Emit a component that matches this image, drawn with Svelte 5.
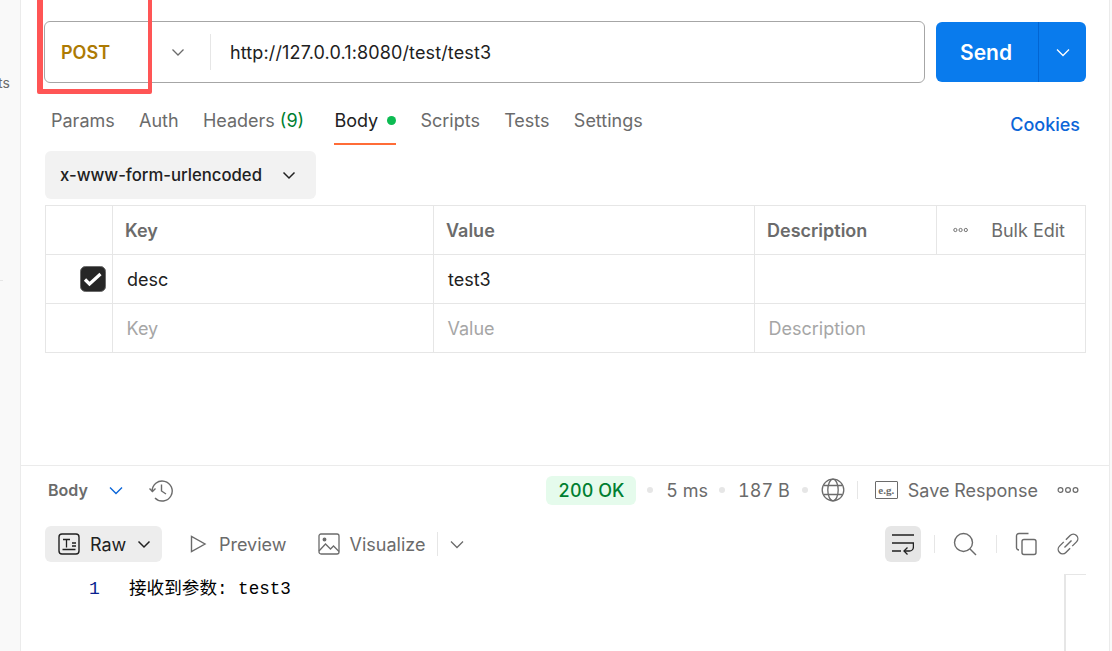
<script>
  const tabs = [
    { label: 'Params' },
    { label: 'Auth' },
    { label: 'Headers', count: '(9)' },
    { label: 'Body', active: true, dot: true },
    { label: 'Scripts' },
    { label: 'Tests' },
    { label: 'Settings' }
  ];
</script>

<div class="app">
  <aside class="rail">
    <span class="railText">ts</span>
    <div class="railLine"></div>
  </aside>

  <main class="main">
    <section class="request">
      <div class="urlRow">
        <div class="urlBox">
          <div class="method">
            <span class="methodName">POST</span>
            <svg class="methodChevron" width="16" height="16" viewBox="0 0 16 16"><path d="M2.5 5.5 8 11l5.5-5.5" fill="none" stroke="#6b6b6b" stroke-width="1.3"/></svg>
          </div>
          <span class="url">http://127.0.0.1:8080/test/test3</span>
        </div>
        <div class="send">
          <span class="sendLabel">Send</span>
          <span class="sendMore">
            <svg width="16" height="16" viewBox="0 0 16 16"><path d="M2 5.5 8 11.5l6-6" fill="none" stroke="#fff" stroke-width="1.3"/></svg>
          </span>
        </div>
      </div>

      <div class="tabs">
        {#each tabs as tab}
          <div class="tab" class:active={tab.active}>
            {tab.label}
            {#if tab.count}<span class="count">{tab.count}</span>{/if}
            {#if tab.dot}<span class="dot"></span>{/if}
          </div>
        {/each}
        <a class="cookies" href="#cookies">Cookies</a>
      </div>

      <div class="bodyType">
        x-www-form-urlencoded
        <svg width="16" height="16" viewBox="0 0 16 16"><path d="M2.5 5.5 8 11l5.5-5.5" fill="none" stroke="#212121" stroke-width="1.5"/></svg>
      </div>

      <div class="table">
        <div class="cell"></div>
        <div class="cell head">Key</div>
        <div class="cell head">Value</div>
        <div class="cell head">Description</div>
        <div class="cell bulk">
          <svg width="16" height="6" viewBox="0 0 16 6"><g fill="none" stroke="#6b6b6b" stroke-width="1"><circle cx="2.5" cy="3" r="1.7"/><circle cx="8" cy="3" r="1.7"/><circle cx="13.5" cy="3" r="1.7"/></g></svg>
          <span>Bulk Edit</span>
        </div>

        <div class="cell check">
          <svg width="26" height="26" viewBox="0 0 26 26"><rect x="0.5" y="0.5" width="25" height="25" rx="5" fill="#262626" stroke="#6b6b6b"/><path d="M5 13.5l4.5 4.5L20.5 8" fill="none" stroke="#fff" stroke-width="3.2"/></svg>
        </div>
        <div class="cell val">desc</div>
        <div class="cell val">test3</div>
        <div class="cell wide"></div>

        <div class="cell"></div>
        <div class="cell val ph">Key</div>
        <div class="cell val ph">Value</div>
        <div class="cell val ph wide">Description</div>
      </div>
    </section>

    <section class="response">
      <div class="respBar">
        <span class="respBody">Body</span>
        <svg class="respChevron" width="16" height="16" viewBox="0 0 16 16"><path d="M2 5.5 8 11.5l6-6" fill="none" stroke="#0c66d8" stroke-width="1.4"/></svg>
        <svg class="history" width="26" height="26" viewBox="0 0 26 26"><g fill="none" stroke="#6b6b6b" stroke-width="1.4"><path d="M4.2 14.5A10 10 0 1 1 7 21"/><path d="M1.5 11.5l3 3 3-3"/><path d="M13.5 7.5V14l4.5 3"/></g></svg>

        <div class="respMeta">
          <span class="status">200 OK</span>
          <span class="sep"></span>
          <span class="time">5 ms</span>
          <span class="sep"></span>
          <span class="size">187 B</span>
          <span class="sep"></span>
          <svg class="globe" width="24" height="24" viewBox="0 0 24 24"><g fill="none" stroke="#6b6b6b" stroke-width="1.3"><circle cx="12" cy="12" r="10.8"/><ellipse cx="12" cy="12" rx="5.2" ry="10.8"/><path d="M2.5 7.5h19M2.5 16.5h19"/></g></svg>
          <span class="vbar"></span>
          <span class="eg">e.g.</span>
          <span class="saveLabel">Save Response</span>
          <svg class="more" width="22" height="8" viewBox="0 0 22 8"><g fill="none" stroke="#6b6b6b" stroke-width="1.2"><circle cx="3.5" cy="4" r="2.4"/><circle cx="11" cy="4" r="2.4"/><circle cx="18.5" cy="4" r="2.4"/></g></svg>
        </div>
      </div>

      <div class="viewBar">
        <div class="viewBtn raw">
          <svg width="22" height="22" viewBox="0 0 22 22"><rect x="1" y="1" width="20" height="20" rx="3" fill="none" stroke="#212121" stroke-width="1.4"/><path d="M5 6.5h7M8.5 6.5v8M4.5 16.5h13M14 10h4M14 13h4" fill="none" stroke="#212121" stroke-width="1.3"/></svg>
          <span>Raw</span>
          <svg width="16" height="16" viewBox="0 0 16 16"><path d="M2.5 5.5 8 11l5.5-5.5" fill="none" stroke="#212121" stroke-width="1.5"/></svg>
        </div>
        <div class="viewBtn preview">
          <svg width="18" height="20" viewBox="0 0 18 20"><path d="M2.5 2.5v15L16 10z" fill="none" stroke="#6b6b6b" stroke-width="1.4"/></svg>
          <span>Preview</span>
        </div>
        <div class="viewBtn">
          <svg width="22" height="22" viewBox="0 0 22 22"><g fill="none" stroke="#6b6b6b" stroke-width="1.3"><rect x="1" y="1" width="20" height="20" rx="2"/><path d="M1 18l6.5-7 5 5 3-3 5.5 5.5"/><circle cx="6.5" cy="6.5" r="1.3" fill="#6b6b6b"/></g></svg>
          <span>Visualize</span>
        </div>
        <span class="viewDivider"></span>
        <svg class="viewChevron" width="16" height="16" viewBox="0 0 16 16"><path d="M2 5.5 8 11.5l6-6" fill="none" stroke="#6b6b6b" stroke-width="1.3"/></svg>

        <div class="viewTools">
          <span class="wrapBtn">
            <svg width="22" height="23" viewBox="0 0 22 23"><g fill="none" stroke="#212121" stroke-width="1.3"><path d="M0 2h22M0 10h22M0 18h9"/><path d="M21.4 10v4a4 4 0 0 1-4 4H12"/><path d="M15.5 14.5 12 18l3.5 3.5"/></g></svg>
          </span>
          <span class="toolBar first"></span>
          <svg class="search" width="24" height="24" viewBox="0 0 24 24"><g fill="none" stroke="#6b6b6b" stroke-width="1.4"><circle cx="10.5" cy="10.5" r="9"/><path d="M17 17l6 6"/></g></svg>
          <span class="toolBar second"></span>
          <svg class="copy" width="22" height="24" viewBox="0 0 22 24"><g fill="none" stroke="#6b6b6b" stroke-width="1.4"><rect x="7" y="7.5" width="14" height="15" rx="2"/><path d="M4 18c-1.5 0-2.5-1-2.5-2.5V4C1.500 2.5 2.5 1.5 4 1.5h9.5"/></g></svg>
          <svg class="link" width="22" height="22" viewBox="0 0 22 22"><g fill="none" stroke="#6b6b6b" stroke-width="1.4" transform="rotate(-45 11 11)"><path d="M9.5 6.500H3.500a4.500 4.500 0 0 0 0 9h6"/><path d="M12.500 6.500h6a4.500 4.500 0 0 1 0 9h-6"/><path d="M6 11h10"/></g></svg>
        </div>
      </div>

      <div class="code">
        <span class="lineNo">1</span>
        <span class="codeText">接收到参数: test3</span>
        <span class="minimap"></span>
      </div>
    </section>
  </main>

  <div class="edge"></div>
  <div class="annotation"></div>
</div>

<style>
  :global(body) {
    margin: 0;
    background: #fff;
  }
  .app {
    position: relative;
    display: flex;
    width: 1112px;
    height: 651px;
    overflow: hidden;
    font-family: Inter, "Noto Sans CJK SC", sans-serif;
    font-size: 18px;
    color: #212121;
  }
  .rail {
    position: relative;
    flex: none;
    width: 20px;
    background: #f9f9f9;
    border-right: 1px solid #ebebeb;
  }
  .railText {
    position: absolute;
    left: -2px;
    top: 74px;
    font-size: 14px;
    color: #6b6b6b;
  }
  .railLine {
    margin-top: 280px;
    width: 3px;
    height: 1px;
    background: #e6e6e6;
  }
  .main {
    flex: 1;
    min-width: 0;
    display: flex;
    flex-direction: column;
  }
  .edge {
    flex: none;
    width: 2px;
    background: #f9f9f9;
    border-left: 1px solid #ebebeb;
  }
  .annotation {
    position: absolute;
    left: 37px;
    top: -10px;
    width: 105px;
    height: 94px;
    border: 5px solid #ff5555;
    border-left-width: 6px;
    border-right-width: 4px;
    border-radius: 2px;
  }

  .request {
    flex: none;
    height: 466px;
    box-sizing: border-box;
    border-bottom: 1px solid #ebebeb;
    padding: 21px 23px 0 23px;
  }
  .urlRow {
    display: flex;
    gap: 11px;
    height: 62px;
  }
  .urlBox {
    flex: 1;
    display: flex;
    align-items: center;
    box-sizing: border-box;
    border: 1px solid #a6a6a6;
    border-radius: 6px;
  }
  .method {
    display: flex;
    align-items: center;
    justify-content: space-between;
    box-sizing: border-box;
    width: 166px;
    height: 36px;
    padding: 0 24px 0 16px;
    border-right: 1px solid #e6e6e6;
  }
  .methodName {
    font-weight: 600;
    color: #ad7a03;
  }
  .methodChevron {
    display: block;
  }
  .url {
    margin-left: 19px;
    letter-spacing: 0.13px;
    color: #212121;
  }
  .send {
    flex: none;
    display: flex;
    align-items: center;
    width: 150px;
    height: 60px;
    margin-top: 1px;
    border-radius: 6px;
    background: #097bed;
    color: #fff;
  }
  .sendLabel {
    flex: none;
    box-sizing: border-box;
    width: 102px;
    padding-right: 2px;
    text-align: center;
    font-size: 21px;
    font-weight: 600;
  }
  .sendMore {
    flex: 1;
    display: flex;
    align-items: center;
    justify-content: center;
    align-self: stretch;
    border-left: 1px solid #0265d2;
  }

  .tabs {
    display: flex;
    align-items: center;
    height: 48px;
    margin-top: 14px;
    padding: 0 6px 0 7px;
  }
  .tab {
    display: flex;
    align-items: center;
    gap: 5px;
    height: 48px;
    box-sizing: border-box;
    margin-right: 24.25px;
    border-bottom: 2px solid transparent;
    color: #6b6b6b;
    white-space: nowrap;
  }
  .tab.active {
    color: #212121;
    border-bottom-color: #ff6c37;
    margin-left: 6px;
  }
  .count {
    color: #007f31;
  }
  .dot {
    width: 9px;
    height: 9px;
    margin-left: 4px;
    border-radius: 50%;
    background: #0cbb52;
  }
  .cookies {
    margin-left: auto;
    margin-top: 6px;
    color: #0c66d8;
    font-weight: 500;
    text-decoration: none;
  }

  .bodyType {
    display: flex;
    align-items: center;
    justify-content: space-between;
    box-sizing: border-box;
    width: 271px;
    height: 48px;
    margin: 6px 0 0 1px;
    padding: 0 19px 0 15px;
    border-radius: 6px;
    background: #f2f2f2;
    font-size: 16.7px;
    font-weight: 500;
    white-space: nowrap;
  }

  .table {
    display: grid;
    grid-template-columns: 67px 321px 321px 182px 149px;
    grid-auto-rows: 49px;
    box-sizing: border-box;
    width: 1041px;
    margin: 6px 0 0 1px;
    border-top: 1px solid #e6e6e6;
    border-left: 1px solid #e6e6e6;
  }
  .cell {
    display: flex;
    align-items: center;
    box-sizing: border-box;
    border-right: 1px solid #e6e6e6;
    border-bottom: 1px solid #e6e6e6;
    padding: 0 12px;
    white-space: nowrap;
  }
  .wide {
    grid-column: span 2;
  }
  .head {
    color: #6b6b6b;
    font-weight: 600;
  }
  .val {
    padding-left: 14px;
    color: #212121;
  }
  .ph {
    padding-left: 13.5px;
    color: #a6a6a6;
  }
  .check {
    justify-content: flex-end;
    padding: 0 6px 0 0;
  }
  .bulk {
    gap: 23px;
    padding: 0 20px 0 16px;
    color: #6b6b6b;
  }

  .response {
    flex: 1;
    min-height: 0;
    padding: 0 30px 0 27px;
  }
  .respBar {
    display: flex;
    align-items: center;
    height: 48px;
  }
  .respBody {
    font-size: 16px;
    font-weight: 600;
    color: #6b6b6b;
  }
  .respChevron {
    margin-left: 20px;
  }
  .history {
    margin-left: 24px;
  }
  .respMeta {
    display: flex;
    align-items: center;
    margin-left: auto;
    font-variant-numeric: tabular-nums;
    color: #6b6b6b;
  }
  .status {
    padding: 4px 12px;
    margin-right: 11px;
    border-radius: 6px;
    background: #e5fbec;
    color: #007f31;
    font-weight: 500;
  }
  .sep {
    width: 6px;
    height: 6px;
    margin: 0 13px 0 0;
    border-radius: 50%;
    background: #e6e6e6;
  }
  .time {
    margin-right: 11px;
  }
  .size {
    margin-right: 12px;
  }
  .vbar {
    width: 1px;
    height: 18px;
    margin: 0 17px 0 12px;
    background: #e6e6e6;
  }
  .eg {
    display: flex;
    align-items: center;
    justify-content: center;
    box-sizing: border-box;
    width: 23px;
    height: 18px;
    border: 1px solid #6b6b6b;
    border-radius: 1px;
    font-family: "Liberation Serif", serif;
    font-size: 11px;
    font-weight: 700;
  }
  .saveLabel {
    margin-left: 10px;
  }
  .more {
    margin-left: 19px;
  }

  .viewBar {
    display: flex;
    align-items: center;
    height: 36px;
    margin: 12px 0 0 -3px;
    color: #6b6b6b;
  }
  .viewBtn {
    display: flex;
    align-items: center;
    gap: 10px;
    height: 36px;
  }
  .viewBtn.raw {
    box-sizing: border-box;
    width: 117px;
    padding-left: 13px;
    margin-right: 27px;
    border-radius: 6px;
    background: #ededed;
    color: #212121;
  }
  .viewBtn.preview {
    gap: 12px;
    margin-right: 31px;
  }
  .viewDivider {
    width: 1px;
    height: 24px;
    margin-left: 12px;
    background: #e6e6e6;
  }
  .viewChevron {
    margin-left: 11px;
  }
  .viewTools {
    display: flex;
    align-items: center;
    margin-left: auto;
  }
  .wrapBtn {
    display: flex;
    align-items: center;
    justify-content: center;
    width: 36px;
    height: 36px;
    border-radius: 6px;
    background: #e6e6e6;
  }
  .toolBar {
    width: 1px;
    height: 18px;
    background: #e6e6e6;
  }
  .toolBar.first {
    margin: 0 18px 0 13px;
  }
  .toolBar.second {
    margin: 0 18px 0 19px;
  }
  .link {
    margin-left: 20px;
  }

  .code {
    position: relative;
    display: flex;
    align-items: baseline;
    height: 32px;
    margin-top: 11px;
    line-height: 32px;
    font-family: "Liberation Mono", "Noto Sans CJK SC", monospace;
    font-size: 17.6px;
  }
  .lineNo {
    flex: none;
    width: 40px;
    margin-left: 41px;
    font-size: 18px;
    color: #0a1f8f;
  }
  .codeText {
    color: #000;
    white-space: pre;
  }
  .minimap {
    position: absolute;
    right: -7px;
    top: 1px;
    width: 20px;
    height: 90px;
    border-top: 1px solid #e6e6e6;
    border-left: 2px solid #e6e6e6;
  }
</style>
